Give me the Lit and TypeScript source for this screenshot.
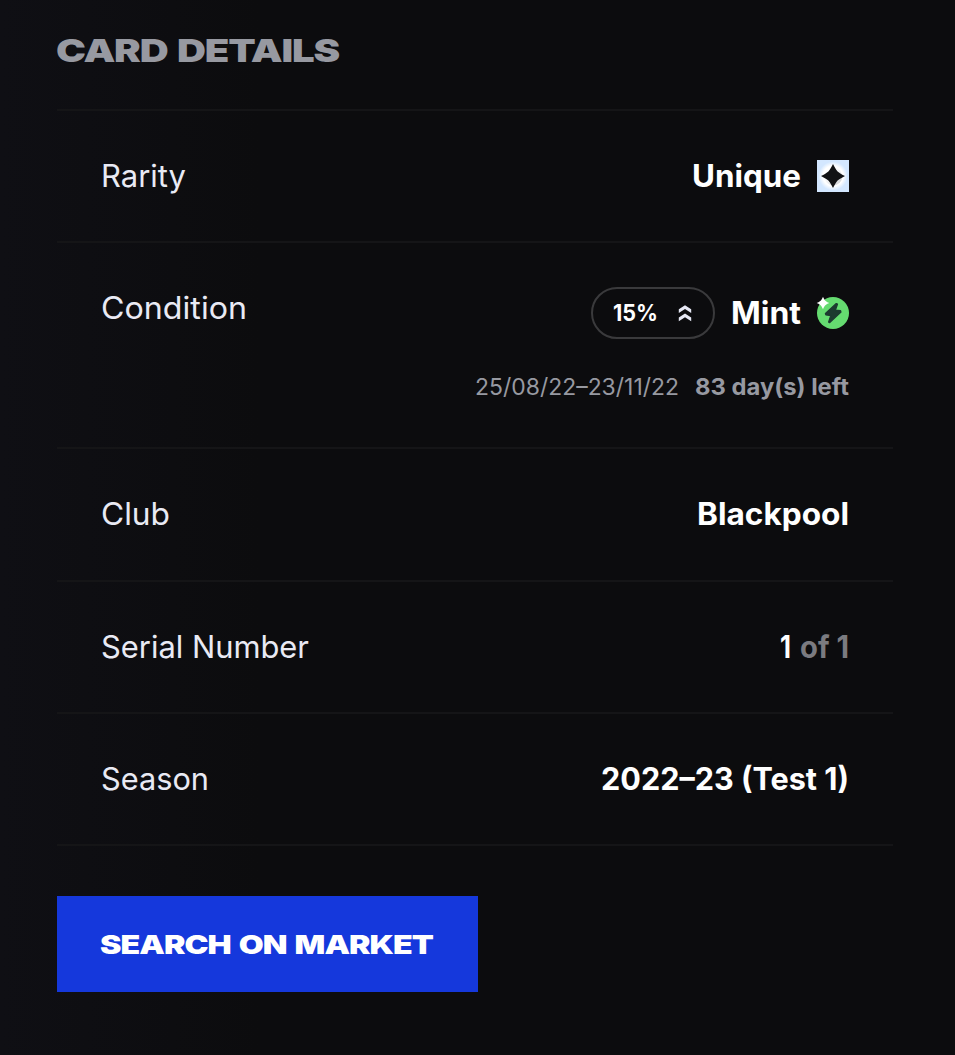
import { LitElement, html, css, svg } from "lit";
import { customElement, property } from "lit/decorators.js";

/** Single line of text stretched horizontally to a given advance width. */
@customElement("fit-text")
class FitText extends LitElement {
  @property({ type: Number }) width = 0;
  static styles = css`
    :host { display: block; flex: none; white-space: nowrap; text-align: left; }
    .run { display: inline-block; transform-origin: 0 50%; vertical-align: top; }
  `;
  render() {
    return html`<span class="run"><slot></slot></span>`;
  }
  updated() {
    const run = this.renderRoot.querySelector(".run") as HTMLElement;
    run.style.transform = "none";
    this.style.width = "max-content";
    const natural = run.getBoundingClientRect().width;
    run.style.transform = `scaleX(${this.width / natural})`;
    this.style.width = `${this.width}px`;
  }
}

const uniqueIcon = svg`
  <svg class="icon" viewBox="0 0 32 32">
    <defs><radialGradient id="halo"><stop offset="0" stop-color="#fff"/><stop offset=".7" stop-color="#fff"/><stop offset="1" stop-color="#d3e7ff"/></radialGradient>
    <linearGradient id="shade" x1="0" y1="0" x2="1" y2="1"><stop offset=".3" stop-color="#777c88" stop-opacity="0"/><stop offset="1" stop-color="#777c88" stop-opacity=".4"/></linearGradient></defs>
    <rect width="32" height="32" fill="#d3e7ff"/>
    <circle cx="16" cy="16" r="14.5" fill="url(#halo)"/>
    <circle cx="16.3" cy="16.5" r="9" fill="url(#shade)"/>
    <path fill="#111214" d="M16 4C17.8 7.2 18.5 8.9 20.6 11.4C23.1 13.5 24.8 14.2 28 16C24.8 17.8 23.1 18.5 20.6 20.6C18.5 23.1 17.8 24.8 16 28C14.2 24.8 13.5 23.1 11.4 20.6C8.9 18.5 7.2 17.8 4 16C7.2 14.2 8.9 13.5 11.4 11.4C13.5 8.9 14.2 7.2 16 4Z"/>
  </svg>`;

const mintIcon = svg`
  <svg class="icon" viewBox="0 0 32 32">
    <circle cx="16" cy="16" r="16" fill="#65db70"/>
    <path fill="#1d3a30" stroke="#1d3a30" stroke-width="1.4" stroke-linejoin="round" d="M19.3 6.600L8.500 16.600L8.900 17.900L13.900 18.600L11.700 25L12.700 25.500L23.900 15.100L23.500 13.800L18.300 13.200L20.400 7.200Z"/>
    <path fill="#fff" d="M6 -.3C7.500 3.300 8.700 4.500 12.300 6C8.700 7.500 7.500 8.700 6 12.300C4.500 8.700 3.300 7.500 -.3 6C3.300 4.500 4.500 3.300 6 -.3Z"/>
  </svg>`;

const chevrons = svg`
  <svg class="chevrons" viewBox="0 0 12 17">
    <path fill="#e6e8f4" d="M6 .300L12.200 4.300V7.900L6 4L-.2 7.900V4.300ZM6 8.600L12.200 12.600V16.200L6 12.300L-.2 16.200V12.600Z"/>
  </svg>`;

@customElement("app-root")
class AppRoot extends LitElement {
  static styles = css`
    :host {
      display: block; box-sizing: border-box; width: 955px; height: 1055px;
      padding: 30px 62px 0 57px; overflow: hidden;
      background: linear-gradient(90deg, #0f0f14 0, #0c0c0e 260px, #0c0c0e 100%);
      color: #fff; font-family: Inter, "Open Sans", sans-serif;
    }
    .title { margin: 0 0 0 -1px; box-sizing: border-box; padding-top: 1px; height: 79px; font-size: 31.5px; line-height: 40px; font-weight: 900; letter-spacing: -0.03em; word-spacing: 0.07em; color: #9799a1; }
    .row { display: flex; justify-content: space-between; align-items: flex-start; box-sizing: border-box; height: 132px; border-top: 2px solid #151517; padding: 45px 44px 0; font-size: 31px; line-height: 40px; }
    .row.condition { height: 206px; }
    .row.club { height: 133px; }
    .row.season { height: 134px; border-bottom: 2px solid #151517; }
    .label { color: #e9eaf4; font-weight: 400; }
    .value { display: flex; align-items: center; gap: 16px; font-weight: 700; }
    .serial { gap: 9px; }
    .muted { color: #7b7b80; }
    .stack { display: flex; flex-direction: column; align-items: flex-end; gap: 32px; margin-top: -1px; }
    .pill { box-sizing: border-box; width: 124px; height: 52px; border: 2px solid #3a3a3c; border-radius: 26px; display: flex; align-items: center; gap: 21px; padding-left: 20px; font-size: 23px; line-height: 32px; }
    .dates { display: flex; gap: 16px; font-size: 23px; line-height: 32px; color: #9799a1; }
    .left { font-weight: 700; }
    .icon { width: 32px; height: 32px; display: block; overflow: visible; }
    .chevrons { width: 12px; height: 17px; display: block; overflow: visible; }
    .market { display: flex; align-items: center; box-sizing: border-box; width: 421px; height: 96px; margin-top: 50px; padding: 2px 0 0 43px; border: 0; background: #1538dc; color: #fff; font: 900 26px/34px Inter, "Open Sans", sans-serif; letter-spacing: -0.03em; word-spacing: 0.08em; }
  `;
  render() {
    return html`
      <h2 class="title"><fit-text width="283">CARD DETAILS</fit-text></h2>
      <div class="row">
        <fit-text class="label" width="85">Rarity</fit-text>
        <div class="value"><fit-text width="109">Unique</fit-text>${uniqueIcon}</div>
      </div>
      <div class="row condition">
        <fit-text class="label" width="146">Condition</fit-text>
        <div class="stack">
          <div class="value">
            <div class="pill"><fit-text width="45">15%</fit-text>${chevrons}</div>
            <fit-text width="70">Mint</fit-text>${mintIcon}
          </div>
          <div class="dates">
            <fit-text width="204">25/08/22–23/11/22</fit-text>
            <fit-text class="left" width="154">83 day(s) left</fit-text>
          </div>
        </div>
      </div>
      <div class="row club">
        <fit-text class="label" width="69">Club</fit-text>
        <div class="value"><fit-text width="152">Blackpool</fit-text></div>
      </div>
      <div class="row">
        <fit-text class="label" width="208">Serial Number</fit-text>
        <div class="value serial"><fit-text width="11">1</fit-text><fit-text class="muted" width="49">of 1</fit-text></div>
      </div>
      <div class="row season">
        <fit-text class="label" width="108">Season</fit-text>
        <div class="value"><fit-text width="248">2022–23 (Test 1)</fit-text></div>
      </div>
      <button class="market"><fit-text width="333">SEARCH ON MARKET</fit-text></button>
    `;
  }
}
